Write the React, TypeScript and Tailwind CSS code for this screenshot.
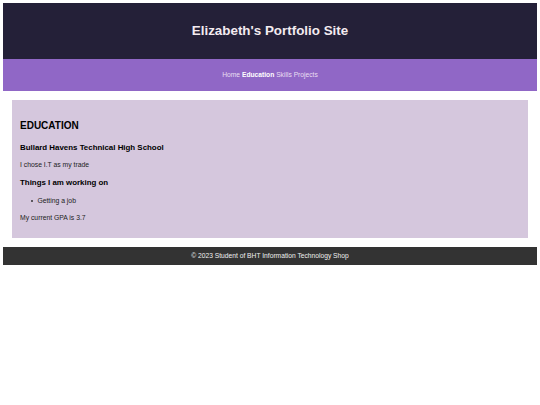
export default function App() {
  return (
    <div className="min-h-screen bg-white px-[3px] pt-[3px] font-['Liberation_Sans',Arial,sans-serif] text-[#222]">
      <header className="flex h-[56px] items-center justify-center bg-[#242038]">
        <h1 className="text-[13.4px] font-bold leading-none text-[#f3ebf0]">
          Elizabeth's Portfolio Site
        </h1>
      </header>

      <nav className="flex h-[32px] items-center justify-center gap-[1.9px] bg-[#9067c6] text-[6.7px] leading-none text-[#eadff2]">
        <span>Home</span>
        <span className="font-bold text-white">Education</span>
        <span>Skills</span>
        <span>Projects</span>
      </nav>

      <main className="px-[9px] pt-[9px]">
        <section className="bg-[#d5c7dd] px-[8px] pb-[16px] pt-[20px]">
          <h2 className="text-[10px] font-bold leading-[12px] text-black">EDUCATION</h2>
          <h3 className="mt-[11px] text-[7.9px] font-bold leading-[10px] text-black">
            Bullard Havens Technical High School
          </h3>
          <p className="mt-[8px] text-[6.8px] leading-[8px]">I chose I.T as my trade</p>
          <h3 className="mt-[9px] text-[7.9px] font-bold leading-[10px] text-black">
            Things I am working on
          </h3>
          <ul className="mt-[9px] pl-[11px] text-[6.8px] leading-[8px]">
            <li className="flex items-center gap-[4px]">
              <span className="h-[2.4px] w-[2.4px] rounded-full bg-[#333]" />
              Getting a job
            </li>
          </ul>
          <p className="mt-[9px] text-[6.8px] leading-[8px]">My current GPA is 3.7</p>
        </section>
      </main>

      <footer className="mt-[9px] flex h-[18px] items-center justify-center bg-[#333333] text-[6.7px] leading-none text-[#f0f0f0]">
        © 2023 Student of BHT Information Technology Shop
      </footer>
    </div>
  );
}
